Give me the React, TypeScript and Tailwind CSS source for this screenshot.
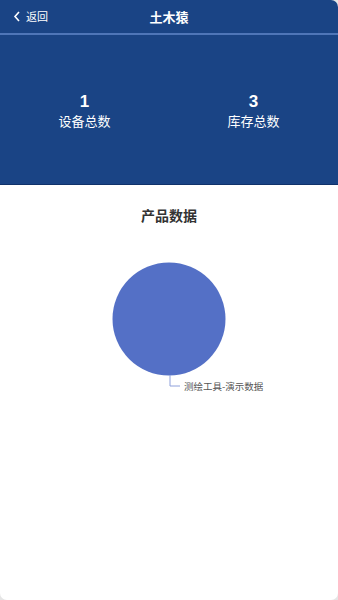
import React from "react";

export default function App() {
  return (
    <div className="w-[338px] h-[600px] bg-[#e5e5e5] overflow-hidden" style={{ fontFamily: '"Noto Sans CJK SC", "Noto Sans", sans-serif' }}>
      <div className="w-full h-full bg-white rounded-tr-[7px] rounded-b-[7px] overflow-hidden flex flex-col">
        <div className="bg-[#1a4485] h-[185px] flex flex-col border-b border-[#10326a]">
          <div className="h-[35px] flex items-center relative border-b-2 border-[#4f76b8]">
            <div className="flex items-center pl-[13px] text-white text-[11px] gap-[5px]">
              <svg width="8" height="11" viewBox="0 0 8 11" fill="none">
                <path d="M6 1 L2 5.5 L6 10" stroke="white" strokeWidth="1.6" />
              </svg>
              <span>返回</span>
            </div>
            <div className="absolute left-0 right-0 top-0 h-full flex items-center justify-center pointer-events-none">
              <span className="text-white text-[13px] font-bold">土木猿</span>
            </div>
          </div>
          <div className="flex-1 flex items-center pt-[2px]">
            <div className="flex-1 flex flex-col items-center text-white">
              <span className="text-[17px] font-bold leading-[20px]" style={{ fontFamily: '"Liberation Sans", sans-serif' }}>1</span>
              <span className="text-[13px] leading-[18px]">设备总数</span>
            </div>
            <div className="flex-1 flex flex-col items-center text-white">
              <span className="text-[17px] font-bold leading-[20px]" style={{ fontFamily: '"Liberation Sans", sans-serif' }}>3</span>
              <span className="text-[13px] leading-[18px]">库存总数</span>
            </div>
          </div>
        </div>
        <div className="flex flex-col items-center pt-[20px]">
          <span className="text-[14px] font-bold text-[#333]">产品数据</span>
          <div className="mt-[3px] w-full flex justify-center">
            <svg width="338" height="180" viewBox="0 0 338 180">
              <circle cx="169" cy="90" r="56.5" fill="#5470c6" />
              <polyline points="170,146 170,157 180,157" fill="none" stroke="#8ea0db" strokeWidth="1" />
              <text x="184" y="160.5" fontSize="9.5" fill="#555" fontFamily='"Noto Sans CJK SC", sans-serif'>测绘工具-演示数据</text>
            </svg>
          </div>
        </div>
      </div>
    </div>
  );
}
